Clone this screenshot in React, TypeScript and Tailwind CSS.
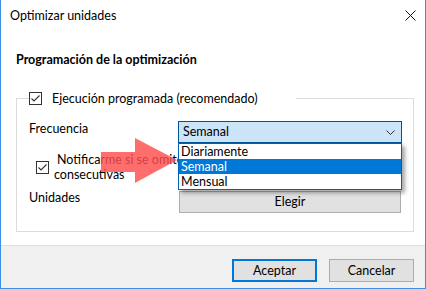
import React from "react";

function CheckBox() {
  return (
    <svg width="13" height="13" viewBox="0 0 13 13" className="shrink-0 block">
      <rect x="0.5" y="0.5" width="12" height="12" fill="#fff" stroke="#333" />
      <polyline points="2.5,6.5 5,9 10.5,3.5" fill="none" stroke="#333" strokeWidth="1.1" />
    </svg>
  );
}

export default function App() {
  const options = ["Diariamente", "Semanal", "Mensual"];

  return (
    <div
      className="relative w-[426px] h-[289px] flex flex-col bg-white border-x border-b border-[#3f8ee6] text-[12.5px] text-black overflow-hidden"
      style={{ fontFamily: 'Lato, "Noto Sans", sans-serif' }}
    >
      {/* Title bar */}
      <div className="h-[31px] shrink-0 flex items-center justify-between pl-[9px] pr-[9px]">
        <span className="leading-[16px]">Optimizar unidades</span>
        <svg width="11" height="11" viewBox="0 0 11 11" className="mb-[1px]">
          <path d="M0.5 0.5 L10.5 10.5 M10.5 0.5 L0.5 10.5" stroke="#111" strokeWidth="1" />
        </svg>
      </div>

      {/* Body */}
      <div className="flex-1 pl-[15px] pt-[21px]">
        <div className="font-bold leading-[16px]">Programación de la optimización</div>

        <fieldset className="mt-[24px] w-[398px] border border-[#dcdcdc] pb-[18px] pl-[12px]">
          <legend className="w-[267px] h-[13px] flex items-center gap-[10px]">
            <CheckBox />
            <span className="leading-[13px]">Ejecución programada (recomendado)</span>
          </legend>

          <div className="grid grid-cols-[149px_224px] gap-y-[9px] pt-[16px]">
            {/* Frecuencia */}
            <div className="leading-[16px]">Frecuencia</div>
            <div className="relative z-10">
              <div className="h-[22px] flex items-center justify-between pl-[4px] pr-[6px] bg-[#cce4f7] border border-[#005499]">
                <span className="leading-[14px]">Semanal</span>
                <svg width="9" height="5" viewBox="0 0 9 5">
                  <polyline points="0.5,0.5 4.5,4.5 8.5,0.5" fill="none" stroke="#333" strokeWidth="1" />
                </svg>
              </div>
              <ul className="absolute left-0 top-full w-full border border-[#0063b1] bg-white shadow-[3px_3px_4px_rgba(0,0,0,0.35)]">
                {options.map((o) => (
                  <li
                    key={o}
                    className={`h-[15px] leading-[15px] pl-[2px] ${o === "Semanal" ? "bg-[#0078d7] text-white" : ""}`}
                  >
                    {o}
                  </li>
                ))}
              </ul>
            </div>

            {/* Notificar (rest of line 1 sits under the open list) */}
            <div className="col-span-2 flex items-center pl-[7px] gap-[5px]">
              <CheckBox />
              <div className="leading-[15px] whitespace-nowrap">
                <div className="pl-[3px]">Notificarme si se omite</div>
                <div>consecutivas</div>
              </div>
            </div>

            {/* Unidades */}
            <div className="leading-[13px]">Unidades</div>
            <button className="h-[22px] ml-[1px] w-[222px] bg-[#e1e1e1] border border-[#adadad] leading-[14px]">
              Elegir
            </button>
          </div>
        </fieldset>
      </div>

      {/* Footer */}
      <div className="h-[43px] shrink-0 bg-[#f0f0f0] border-t border-[#dfdfdf] flex justify-end items-start gap-[12px] pt-[13px] pr-[11px]">
        <button className="w-[85px] h-[23px] bg-[#e1e1e1] border-2 border-[#0078d7] leading-[14px]">Aceptar</button>
        <button className="w-[85px] h-[23px] bg-[#e1e1e1] border border-[#adadad] leading-[14px]">Cancelar</button>
      </div>

      {/* Red annotation arrow */}
      <svg
        className="absolute left-[98px] top-[136px] z-20 pointer-events-none"
        width="82"
        height="50"
        viewBox="0 0 82 50"
      >
        <polygon
          points="2,16 36,16 36,2 78,24 36,47 36,36 2,36"
          fill="#ff4d4d"
          fillOpacity="0.82"
        />
      </svg>
    </div>
  );
}
